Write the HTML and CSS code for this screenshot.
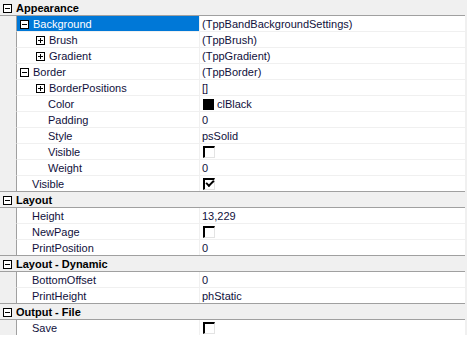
FILE: index.html
```html
<!DOCTYPE html>
<html lang="en">
<head>
    <meta charset="UTF-8">
    <title>Object Inspector</title>
    <link rel="stylesheet" href="styles.css">
</head>
<body>
    <div class="inspector">
        <div class="group">
            <div class="row cat"><span class="box minus"></span><span class="cat-name">Appearance</span></div>
            <div class="row selected">
                <div class="name lvl1"><span class="box minus"></span>Background</div>
                <div class="value">(TppBandBackgroundSettings)</div>
            </div>
            <div class="row">
                <div class="name lvl2"><span class="box plus"></span>Brush</div>
                <div class="value">(TppBrush)</div>
            </div>
            <div class="row">
                <div class="name lvl2"><span class="box plus"></span>Gradient</div>
                <div class="value">(TppGradient)</div>
            </div>
            <div class="row">
                <div class="name lvl1"><span class="box minus"></span>Border</div>
                <div class="value">(TppBorder)</div>
            </div>
            <div class="row">
                <div class="name lvl2"><span class="box plus"></span>BorderPositions</div>
                <div class="value">[]</div>
            </div>
            <div class="row">
                <div class="name lvl2 nobox">Color</div>
                <div class="value"><span class="swatch"></span>clBlack</div>
            </div>
            <div class="row">
                <div class="name lvl2 nobox">Padding</div>
                <div class="value">0</div>
            </div>
            <div class="row">
                <div class="name lvl2 nobox">Style</div>
                <div class="value">psSolid</div>
            </div>
            <div class="row">
                <div class="name lvl2 nobox">Visible</div>
                <div class="value"><span class="check"></span></div>
            </div>
            <div class="row">
                <div class="name lvl2 nobox">Weight</div>
                <div class="value">0</div>
            </div>
            <div class="row">
                <div class="name lvl1 nobox">Visible</div>
                <div class="value"><span class="check on"></span></div>
            </div>
        </div>
        <div class="group">
            <div class="row cat"><span class="box minus"></span><span class="cat-name">Layout</span></div>
            <div class="row">
                <div class="name lvl1 nobox">Height</div>
                <div class="value">13,229</div>
            </div>
            <div class="row">
                <div class="name lvl1 nobox">NewPage</div>
                <div class="value"><span class="check"></span></div>
            </div>
            <div class="row">
                <div class="name lvl1 nobox">PrintPosition</div>
                <div class="value">0</div>
            </div>
        </div>
        <div class="group">
            <div class="row cat"><span class="box minus"></span><span class="cat-name">Layout - Dynamic</span></div>
            <div class="row">
                <div class="name lvl1 nobox">BottomOffset</div>
                <div class="value">0</div>
            </div>
            <div class="row">
                <div class="name lvl1 nobox">PrintHeight</div>
                <div class="value">phStatic</div>
            </div>
        </div>
        <div class="group">
            <div class="row cat"><span class="box minus"></span><span class="cat-name">Output - File</span></div>
            <div class="row">
                <div class="name lvl1 nobox">Save</div>
                <div class="value"><span class="check"></span></div>
            </div>
        </div>
    </div>
</body>
</html>
```

FILE: styles.css
```css
* {
    box-sizing: border-box;
}

body {
    margin: 0;
    background-color: #ffffff;
    font-family: "Liberation Sans", Arial, sans-serif;
    font-size: 11px;
    color: #10103c;
}

.inspector {
    width: 467px;
    border-right: 2px solid #f0f0f0;
    background-color: #f0f0f0;
}

.group {
    border-top: 1px solid #a0a0a0;
}

.group:first-child {
    border-top: none;
}

.row {
    display: flex;
    height: 16px;
    border-bottom: 1px solid #f0f0f0;
    margin-left: 16px;
    border-left: 1px solid #a0a0a0;
    background-color: #fff;
}

.group .row:last-child {
    border-bottom: none;
    height: 15px;
}

.row.cat {
    margin-left: 0;
    border-left: none;
    background-color: #f0f0f0;
    border-bottom: 1px solid #a0a0a0;
    align-items: flex-start;
    padding-top: 1px;
    padding-left: 3px;
    color: #000;
}

.cat-name {
    font-weight: bold;
    margin-left: 4px;
    line-height: 15px;
}

.name {
    width: 183px;
    flex: none;
    display: flex;
    align-items: flex-start;
    padding-top: 1px;
    line-height: 15px;
    white-space: nowrap;
    border-right: 1px solid #f0f0f0;
}

.name.lvl1 { padding-left: 3px; }
.name.lvl2 { padding-left: 19px; }
.name.lvl1.nobox { padding-left: 15px; }
.name.lvl2.nobox { padding-left: 31px; }

.name .box {
    margin-right: 4px;
}

.row.selected .name {
    background-color: #0078d7;
    color: #fff;
}

.value {
    flex: 1;
    display: flex;
    align-items: flex-start;
    padding-top: 1px;
    padding-left: 2px;
    line-height: 15px;
    white-space: nowrap;
}

.box {
    position: relative;
    display: inline-block;
    width: 9px;
    height: 9px;
    margin-top: 3px;
    border: 1px solid #000;
    background-color: #fff;
    flex: none;
}

.box::before {
    content: "";
    position: absolute;
    left: 1px;
    top: 3px;
    width: 5px;
    height: 1px;
    background-color: #000;
}

.box.plus::after {
    content: "";
    position: absolute;
    left: 3px;
    top: 1px;
    width: 1px;
    height: 5px;
    background-color: #000;
}

.swatch {
    display: inline-block;
    width: 11px;
    height: 11px;
    background-color: #000;
    margin-top: 2px;
    margin-right: 3px;
    margin-left: 1px;
}

.check {
    position: relative;
    display: inline-block;
    width: 12px;
    height: 12px;
    margin-left: 1px;
    margin-top: 1px;
    border-top: 2px solid #000;
    border-left: 2px solid #000;
    border-right: 1px solid #e3e3e3;
    border-bottom: 1px solid #e3e3e3;
    background-color: #fff;
}

.check.on::after {
    content: "";
    position: absolute;
    left: 1px;
    top: 0px;
    width: 6px;
    height: 3px;
    border-left: 2px solid #000;
    border-bottom: 2px solid #000;
    transform: rotate(-45deg);
}
```
